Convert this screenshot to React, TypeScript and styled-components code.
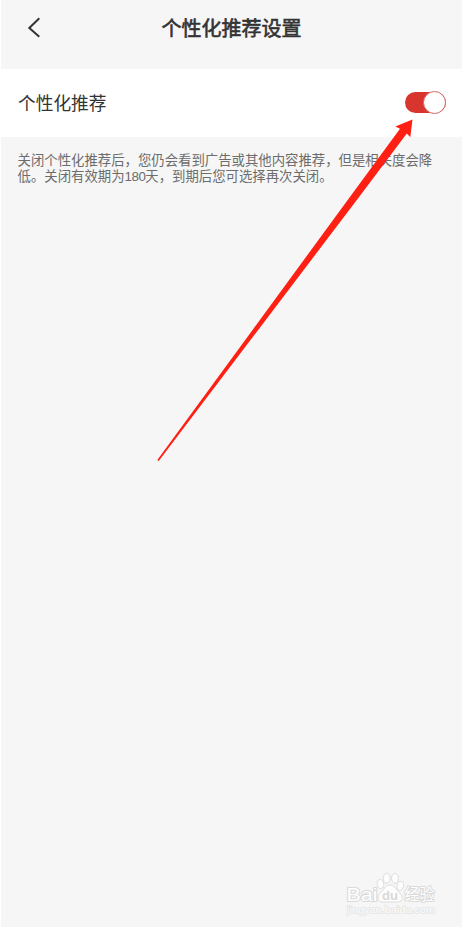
import React from "react";
import styled, { createGlobalStyle } from "styled-components";

const GlobalStyle = createGlobalStyle`
  body {
    margin: 0;
    background: #fff;
    font-family: "Liberation Sans", "Noto Sans CJK SC", sans-serif;
  }
`;

const Screen = styled.main`
  position: relative;
  box-sizing: border-box;
  width: 461px;
  height: 927px;
  margin-left: 1px;
  background: #f6f6f6;
  overflow: hidden;
`;

const Header = styled.header`
  display: grid;
  grid-template-columns: 60px 1fr 60px;
  height: 69px;
`;

const BackButton = styled.button`
  display: flex;
  align-items: flex-start;
  padding: 17px 0 0 26px;
  border: 0;
  background: none;
`;

const Title = styled.h1`
  margin: 0;
  padding-top: 14px;
  font-size: 20px;
  line-height: 30px;
  font-weight: 400;
  color: #333;
  text-align: center;
  white-space: nowrap;
  -webkit-text-stroke: 0.6px #333;
`;

const SettingRow = styled.section`
  display: flex;
  align-items: center;
  justify-content: space-between;
  box-sizing: border-box;
  height: 68px;
  padding: 0 16px 1px 17px;
  background: #fff;
`;

const Label = styled.span`
  padding-top: 2px;
  font-size: 17.7px;
  line-height: 26px;
  color: #333;
`;

const Switch = styled.button<{ $on: boolean }>`
  display: flex;
  align-items: center;
  justify-content: ${(p) => (p.$on ? "flex-end" : "flex-start")};
  width: 41px;
  height: 21px;
  padding: 0;
  border: 0;
  border-radius: 11px;
  background: ${(p) => (p.$on ? "#d8352f" : "#ddd")};
`;

const Knob = styled.span`
  flex: none;
  box-sizing: border-box;
  width: 23px;
  height: 23px;
  border: 1px solid #d56864;
  border-radius: 50%;
  background: #fff;
`;

const Note = styled.p`
  margin: 0;
  padding: 16px 0 0 16.5px;
  font-size: 13.38px;
  line-height: 16px;
  color: #6c6c6c;
  white-space: nowrap;
`;

const Days = styled.span`
  letter-spacing: -0.5px;
`;

const Pointer = styled.svg`
  position: absolute;
  left: -1px;
  top: 0;
`;

const Watermark = styled.svg`
  position: absolute;
  left: 343px;
  top: 868px;
`;

export default function App() {
  return (
    <>
      <GlobalStyle />
      <Screen>
        <Header>
          <BackButton aria-label="返回">
            <svg width="16" height="22" viewBox="0 0 16 22" fill="none">
              <path d="M12.3 1.3 L2.3 11 L12.3 19.8" stroke="#333" strokeWidth="2" />
            </svg>
          </BackButton>
          <Title>个性化推荐设置</Title>
        </Header>
        <SettingRow>
          <Label>个性化推荐</Label>
          <Switch $on role="switch" aria-checked="true" aria-label="个性化推荐">
            <Knob />
          </Switch>
        </SettingRow>
        <Note>
          关闭个性化推荐后，您仍会看到广告或其他内容推荐，但是相关度会降
          <br />
          低。关闭有效期为<Days>180</Days>天，到期后您可选择再次关闭。
        </Note>
        <Pointer width="464" height="480" viewBox="0 0 464 480">
          <path
            d="M412.5 119.5 L395.3 126.5 L400 128.7 L347.7 200 L157.3 460 L158.7 461 L356.8 200 L406.8 133.5 L410.3 137.3 Z"
            fill="#ff2014"
          />
        </Pointer>
        <Watermark width="100" height="52" viewBox="0 0 100 52">
          <g fill="#fdfdfd" stroke="#dcdcdc" strokeWidth="1">
            <ellipse cx="36.5" cy="16" rx="3.3" ry="4.5" transform="rotate(-14 36.5 16)" />
            <ellipse cx="42.7" cy="10.3" rx="3.5" ry="5" />
            <ellipse cx="51" cy="10.3" rx="3.5" ry="5" />
            <ellipse cx="56.3" cy="17.8" rx="3.3" ry="4.5" transform="rotate(14 56.3 17.8)" />
            <path d="M46 17 C41.5 17 40.5 21 37.5 24 C32 28 33 34 39 34 H53.5 C59.5 34 60 28 54.5 24 C51.5 21 50.5 17 46 17 Z" />
          </g>
          <g fontFamily="Liberation Sans, Noto Sans CJK SC, sans-serif" fontWeight="700">
            <g stroke="#dadada" strokeWidth="2" fill="#fff" paintOrder="stroke" strokeLinejoin="round">
              <text x="2.5" y="32.5" fontSize="19" fontWeight="400" textLength="31" lengthAdjust="spacingAndGlyphs">Bai</text>
              <text x="60.5" y="32" fontSize="15.5" fontWeight="400" textLength="30" lengthAdjust="spacingAndGlyphs">经验</text>
            </g>
            <text x="38" y="31.5" fontSize="13" textLength="16" lengthAdjust="spacingAndGlyphs" fill="#d8d8d8">du</text>
            <text
              x="3"
              y="44.5"
              fontSize="9.5"
              fontWeight="400"
              textLength="88"
              lengthAdjust="spacingAndGlyphs"
              fill="#fcfcfc"
              stroke="#e5e5e5"
              strokeWidth="1.4"
              paintOrder="stroke"
            >
              jingyan.baidu.com
            </text>
          </g>
        </Watermark>
      </Screen>
    </>
  );
}
